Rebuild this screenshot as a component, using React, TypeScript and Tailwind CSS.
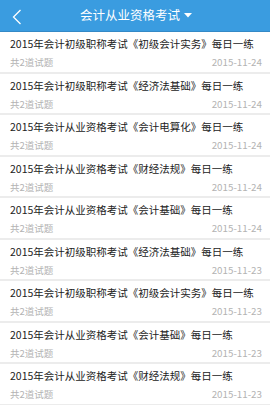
import React from "react";

const rows: [string, string][] = [
  ["2015年会计初级职称考试《初级会计实务》每日一练", "2015-11-24"],
  ["2015年会计初级职称考试《经济法基础》每日一练", "2015-11-24"],
  ["2015年会计从业资格考试《会计电算化》每日一练", "2015-11-24"],
  ["2015年会计从业资格考试《财经法规》每日一练", "2015-11-24"],
  ["2015年会计从业资格考试《会计基础》每日一练", "2015-11-24"],
  ["2015年会计初级职称考试《经济法基础》每日一练", "2015-11-23"],
  ["2015年会计初级职称考试《初级会计实务》每日一练", "2015-11-23"],
  ["2015年会计从业资格考试《会计基础》每日一练", "2015-11-23"],
  ["2015年会计从业资格考试《财经法规》每日一练", "2015-11-23"],
  ["2015年会计从业资格考试《会计电算化》每日一练", "2015-11-23"],
];

export default function App() {
  return (
    <div
      className="w-[270px] h-[405px] overflow-hidden bg-[#ececec]"
      style={{ fontFamily: '"Noto Sans CJK SC", "Noto Sans", sans-serif' }}
    >
      <div className="relative h-[32px] bg-[#3a9ce0] border-b border-[#3489c6] flex items-center justify-center">
        <svg
          className="absolute left-[11px] top-[9px]"
          width="12"
          height="16"
          viewBox="0 0 12 16"
          fill="none"
        >
          <path d="M9.5 1 L2.5 8 L9.5 15" stroke="#ffffff" strokeWidth="1.3" />
        </svg>
        <div className="flex items-center gap-[4px] pl-[2px]">
          <span className="text-white text-[12.5px] leading-none">会计从业资格考试</span>
          <svg width="8" height="5" viewBox="0 0 8 5">
            <path d="M0 0 L8 0 L4 4.5 Z" fill="#ffffff" />
          </svg>
        </div>
      </div>
      <div className="flex flex-col gap-[2px]">
        {rows.map(([t, d], i) => (
          <div key={i} className="h-[39.5px] bg-white pl-[10px] pr-[8px] pt-[4px] shrink-0">
            <div className="text-[10.5px] leading-[15px] text-[#222222] whitespace-nowrap">{t}</div>
            <div className="mt-[4px] flex justify-between items-center h-[15px]">
              <span className="text-[9.5px] text-[#b3b3b3]">共2道试题</span>
              <span className="text-[9.8px] text-[#b3b3b3]">{d}</span>
            </div>
          </div>
        ))}
      </div>
    </div>
  );
}
